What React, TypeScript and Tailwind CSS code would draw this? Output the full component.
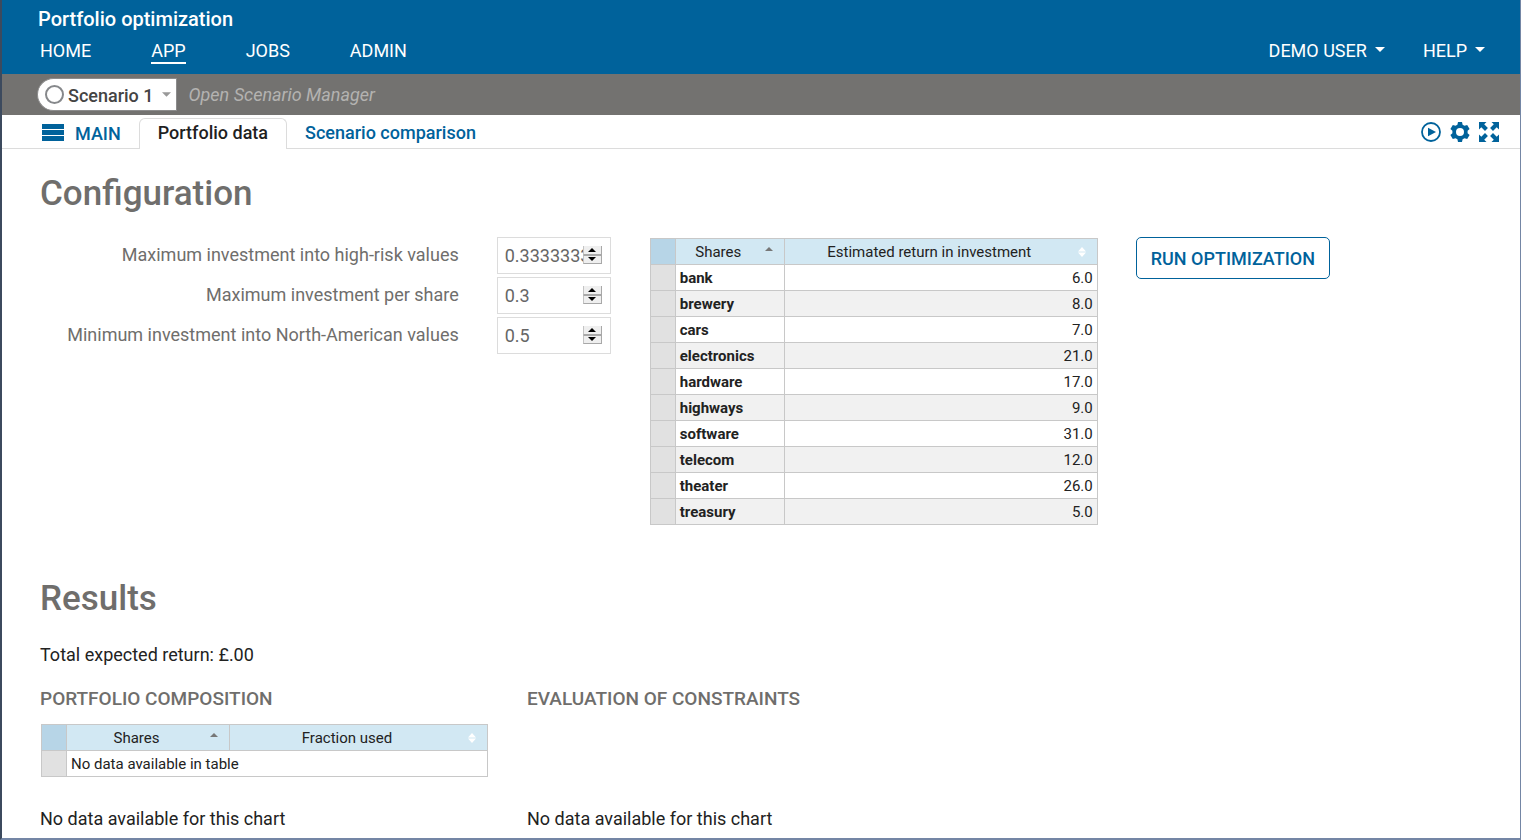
import { useState } from "react";

const NAV = ["HOME", "APP", "JOBS", "ADMIN"];

const SHARES = [
  { name: "bank", ret: "6.0" },
  { name: "brewery", ret: "8.0" },
  { name: "cars", ret: "7.0" },
  { name: "electronics", ret: "21.0" },
  { name: "hardware", ret: "17.0" },
  { name: "highways", ret: "9.0" },
  { name: "software", ret: "31.0" },
  { name: "telecom", ret: "12.0" },
  { name: "theater", ret: "26.0" },
  { name: "treasury", ret: "5.0" },
];

const PARAMS = [
  { id: "max-risk", label: "Maximum investment into high-risk values", value: "0.333333333333333" },
  { id: "max-share", label: "Maximum investment per share", value: "0.3" },
  { id: "min-na", label: "Minimum investment into North-American values", value: "0.5" },
];

function Caret({ className }: { className?: string }) {
  return (
    <svg viewBox="0 0 10 5" className={className} fill="currentColor" aria-hidden="true">
      <path d="M0 0h10L5 5z" />
    </svg>
  );
}

function PlayIcon() {
  return (
    <svg viewBox="0 0 20 20" className="size-5" aria-hidden="true">
      <circle cx="10" cy="10" r="9" fill="none" stroke="currentColor" strokeWidth="1.8" />
      <path d="M7 5.800v8.400l8-4.200z" fill="currentColor" />
    </svg>
  );
}

function GearIcon() {
  return (
    <svg viewBox="0 0 20 20" className="size-5" fill="currentColor" fillRule="evenodd" aria-hidden="true">
      <path d="M8 0h4l.6 2.700 1.900 1.100 2.700-.9 2.400 4-2 1.900v2.400l2 1.900-2.400 4-2.700-.9-1.900 1.100L12 20H8l-.6-2.700-1.900-1.100-2.700.9-2.400-4 2-1.900V8.800l-2-1.900 2.400-4 2.700.9 1.900-1.100zM10 6a4 4 0 1 0 0 8 4 4 0 0 0 0-8z" />
    </svg>
  );
}

function ExpandIcon() {
  return (
    <svg viewBox="0 0 20 20" className="size-5" fill="currentColor" aria-hidden="true">
      <path d="M0 0h7.500L5.200 2.300 8.900 6 6 8.900 2.300 5.200 0 7.500z" />
      <path d="M20 0v7.500l-2.300-2.300L14 8.900 11.100 6l3.700-3.700L12.500 0z" />
      <path d="M0 20v-7.500l2.300 2.300L6 11.100 8.900 14l-3.700 3.700L7.500 20z" />
      <path d="M20 20h-7.500l2.300-2.300L11.100 14l2.900-2.900 3.700 3.700 2.300-2.300z" />
    </svg>
  );
}

function SortHeader({ label, sorted }: { label: string; sorted?: boolean }) {
  return (
    <th scope="col" className="border border-[#c8c8c8] p-0 font-normal">
      <button type="button" className="flex w-full items-center gap-1 pr-[11px]">
        <span className="flex-1 pt-0.5 text-center">{label}</span>
        {sorted ? (
          <svg viewBox="0 0 8 10" className="h-2.5 w-2 text-[#777]" fill="currentColor" aria-hidden="true">
            <path d="M0 4l4-4 4 4z" />
          </svg>
        ) : (
          <svg viewBox="0 0 8 10" className="h-2.5 w-2 text-white" fill="currentColor" aria-hidden="true">
            <path d="M0 4.500l4-4.500 4 4.500zM0 5.500h8l-4 4.500z" />
          </svg>
        )}
      </button>
    </th>
  );
}

function NumberField({ id, label, initial }: { id: string; label: string; initial: string }) {
  const [value, setValue] = useState(initial);
  const step = (d: number) => setValue((v) => String(Math.round((Number(v) + d) * 100) / 100));

  return (
    <div className="flex items-start gap-[38px]">
      <label htmlFor={id} className="flex-1 pt-1 text-right leading-7 text-[#6f6e6c]">
        {label}
      </label>
      <div className="flex h-[37px] w-[114px] items-center border border-[#dcdcdc] pl-[7px] pr-2">
        <input
          id={id}
          type="text"
          inputMode="decimal"
          value={value}
          onChange={(e) => setValue(e.target.value)}
          className="min-w-0 flex-1 bg-transparent text-[#666] outline-none"
        />
        <div className="mb-0.5 flex w-[19px] flex-col text-black">
          <button
            type="button"
            aria-label={`Increase ${label}`}
            onClick={() => step(0.1)}
            className="flex h-[9px] items-center justify-center border-x border-b border-[#a8a8a8] border-l-[#c4c4c4] bg-[#efefef]"
          >
            <Caret className="h-1 w-2 rotate-180" />
          </button>
          <button
            type="button"
            aria-label={`Decrease ${label}`}
            onClick={() => step(-0.1)}
            className="flex h-[9px] items-center justify-center border border-[#a8a8a8] border-l-[#c4c4c4] bg-[#efefef]"
          >
            <Caret className="h-1 w-2" />
          </button>
        </div>
      </div>
    </div>
  );
}

function Header() {
  return (
    <header className="bg-[#00629b] pl-9 pr-[35px] text-white">
      <div className="pt-1 text-xl leading-[30px] font-medium">Portfolio optimization</div>
      <div className="flex h-10 items-start justify-between">
        <nav className="flex gap-[60px] pl-0.5">
          {NAV.map((item) => (
            <a
              key={item}
              href="#"
              className={item === "APP" ? "border-b-2 border-white pt-1.5 leading-[22px]" : "pt-1.5 leading-[22px]"}
            >
              {item}
            </a>
          ))}
        </nav>
        <div className="flex gap-[38px]">
          {["DEMO USER", "HELP"].map((item) => (
            <button key={item} type="button" className="flex items-center gap-2 pt-1.5 leading-[22px]">
              {item}
              <Caret className="mb-1 h-[5px] w-[10px]" />
            </button>
          ))}
        </div>
      </div>
    </header>
  );
}

function ScenarioBar() {
  return (
    <div className="flex h-[41px] items-center gap-3 bg-[#737270] pl-[35px]">
      <button
        type="button"
        className="flex h-[33px] items-center rounded-l-full rounded-r-sm border border-[#8c8c8c] bg-white pl-[7px] pr-[5px] font-medium text-[#444]"
      >
        <span className="mr-1 size-[19px] rounded-full border-2 border-[#86888b]" />
        <span className="pt-0.5">Scenario 1</span>
        <Caret className="ml-2 h-[5px] w-[9px] text-[#999]" />
      </button>
      <a href="#" className="text-[#b4b3b1] italic">
        Open Scenario Manager
      </a>
    </div>
  );
}

function TabBar() {
  return (
    <div className="flex h-[34px] items-end border-b border-[#dcdcdc] pl-10 pr-[21px] font-medium text-[#00629b]">
      <button type="button" className="flex h-[31px] items-center gap-[11px] pr-[18px]">
        <span className="flex w-[22px] flex-col gap-px">
          <span className="h-[5px] bg-current" />
          <span className="h-[5px] bg-current" />
          <span className="h-[5px] bg-current" />
        </span>
        <span className="pt-0.5">MAIN</span>
      </button>
      <a
        href="#"
        className="-mb-px h-[31px] rounded-t-md border border-b-0 border-[#dcdcdc] bg-white px-[18px] leading-7 text-[#1f1f1f]"
      >
        Portfolio data
      </a>
      <a href="#" className="h-[29px] px-[18px] leading-7">
        Scenario comparison
      </a>
      <div className="ml-auto flex gap-[9px] pb-1.5">
        <button type="button" aria-label="Run">
          <PlayIcon />
        </button>
        <button type="button" aria-label="Settings">
          <GearIcon />
        </button>
        <button type="button" aria-label="Full screen">
          <ExpandIcon />
        </button>
      </div>
    </div>
  );
}

export default function App() {
  return (
    <div className="flex min-h-screen flex-col border-r border-b-2 border-l-2 border-[#7486a5] border-l-[#3c4a5e] bg-white font-[Roboto,sans-serif] text-lg text-[#222]">
      <Header />
      <ScenarioBar />
      <TabBar />

      <main className="pl-[38px] pr-[57px]">
        <h1 className="pt-5 text-[35px] leading-[50px] font-medium text-[#6f6e6c]">Configuration</h1>
        <section className="mt-[18px] grid grid-cols-12 gap-x-[38px]">
          <div className="col-span-5 flex flex-col gap-[3px]">
            {PARAMS.map((p) => (
              <NumberField key={p.id} id={p.id} label={p.label} initial={p.value} />
            ))}
          </div>
          <div className="col-span-4 pt-px pl-px">
            <table className="w-full table-fixed border-collapse text-[15px] leading-[23px]">
              <colgroup>
                <col className="w-[25px]" />
                <col className="w-[109px]" />
                <col />
              </colgroup>
              <thead className="bg-[#d2e8f3]">
                <tr>
                  <td className="border border-[#c8c8c8] bg-[#b7d5e7]" />
                  <SortHeader label="Shares" sorted />
                  <SortHeader label="Estimated return in investment" />
                </tr>
              </thead>
              <tbody>
                {SHARES.map((s) => (
                  <tr key={s.name} className="even:bg-[#f1f1f1]">
                    <td className="border border-[#c8c8c8] bg-[#e1e1e1]" />
                    <th scope="row" className="border border-[#c8c8c8] px-1 pt-0.5 pb-0 text-left font-bold">
                      {s.name}
                    </th>
                    <td className="border border-[#c8c8c8] px-1 pt-0.5 pb-0 text-right">{s.ret}</td>
                  </tr>
                ))}
              </tbody>
            </table>
          </div>
          <div className="col-span-3">
            <button
              type="button"
              className="h-[42px] rounded-[5px] border border-[#00629b] px-3.5 pt-0.5 font-medium whitespace-nowrap text-[#00629b]"
            >
              RUN OPTIMIZATION
            </button>
          </div>
        </section>

        <h1 className="mt-[49px] text-[35px] leading-[50px] font-medium text-[#6f6e6c]">Results</h1>
        <p className="mt-[17px] leading-7">Total expected return: £.00</p>
        <section className="mt-4 grid grid-cols-3 gap-x-[38px]">
          <div>
            <h2 className="text-[19px] leading-7 font-medium text-[#6f6e6c]">PORTFOLIO COMPOSITION</h2>
            <div className="mt-[11px] px-px">
              <table className="w-full table-fixed border-collapse text-[15px] leading-[23px]">
                <colgroup>
                  <col className="w-[25px]" />
                  <col className="w-[163px]" />
                  <col />
                </colgroup>
                <thead className="bg-[#d2e8f3]">
                  <tr>
                    <td className="border border-[#c8c8c8] bg-[#b7d5e7]" />
                    <SortHeader label="Shares" sorted />
                    <SortHeader label="Fraction used" />
                  </tr>
                </thead>
                <tbody>
                  <tr>
                    <td className="border border-[#c8c8c8] bg-[#e1e1e1]" />
                    <td colSpan={2} className="border border-[#c8c8c8] px-1 pt-0.5 pb-0">
                      No data available in table
                    </td>
                  </tr>
                </tbody>
              </table>
            </div>
            <p className="mt-7 leading-7">No data available for this chart</p>
          </div>
          <div className="flex flex-col justify-between">
            <h2 className="text-[19px] leading-7 font-medium text-[#6f6e6c]">EVALUATION OF CONSTRAINTS</h2>
            <p className="leading-7">No data available for this chart</p>
          </div>
        </section>
      </main>
    </div>
  );
}
